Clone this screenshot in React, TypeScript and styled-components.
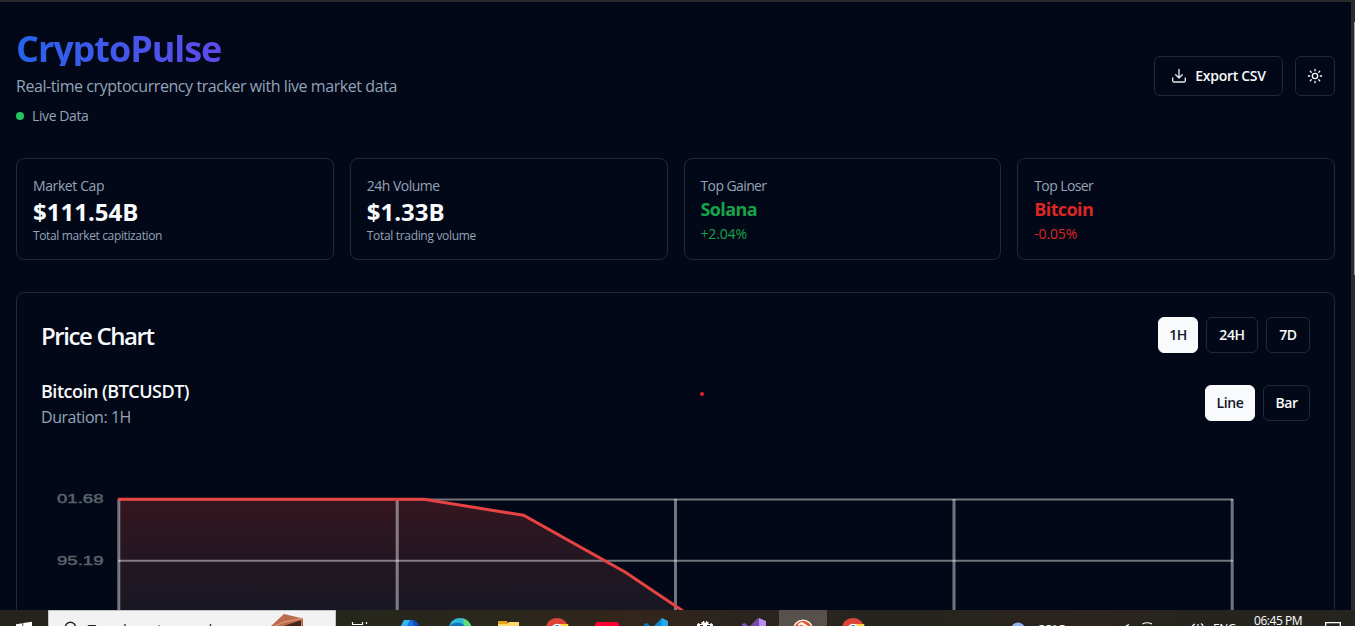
import React from 'react';
import styled, { createGlobalStyle } from 'styled-components';

const GlobalStyle = createGlobalStyle`
  * { box-sizing: border-box; }
  body {
    margin: 0;
    background: #020817;
    color: #f8fafc;
    font-family: "Open Sans", "Noto Sans", sans-serif;
    overflow: hidden;
  }
  h1, h2, h3, p { margin: 0; }
`;

const Screen = styled.div`
  width: 1355px;
  height: 626px;
  display: flex;
  flex-direction: column;
  overflow: hidden;
  background: #020817;
`;

const Viewport = styled.div`
  flex: 1;
  min-height: 0;
  display: flex;
  border-top: 2px solid #2a2a2b;
`;

const Page = styled.main`
  flex: 1;
  min-width: 0;
  padding: 24px 16px 0;
  overflow: hidden;
`;

const ScrollTrack = styled.div`
  width: 4px;
  background: #2c2c2c;
  border-left: 1px solid #2c2c2c;
  padding-left: 2px;
`;

const ScrollThumb = styled.div`
  width: 1px;
  height: 253px;
  margin-top: 20px;
  background: #9f9f9f;
`;

const Header = styled.header`
  display: flex;
  justify-content: space-between;
  align-items: center;
  margin-bottom: 32px;
`;

const Brand = styled.div`
  display: flex;
  flex-direction: column;
  align-items: flex-start;
`;

const Title = styled.h1`
  width: 390px;
  font-size: 36px;
  line-height: 40px;
  font-weight: 700;
  letter-spacing: -1.05px;
  color: transparent;
  background: linear-gradient(to right, #2563eb, #9333ea);
  background-clip: text;
  -webkit-background-clip: text;
  padding-top: 3px;
  height: 40px;
`;

const Tagline = styled.p`
  margin-top: 8px;
  font-size: 16px;
  line-height: 24px;
  letter-spacing: -0.43px;
  color: #94a3b8;
`;

const Live = styled.div`
  display: flex;
  align-items: center;
  gap: 8px;
  margin-top: 8px;
  font-size: 14px;
  line-height: 20px;
  letter-spacing: -0.4px;
  color: #94a3b8;
`;

const LiveDot = styled.span`
  width: 8px;
  height: 8px;
  border-radius: 50%;
  background: #22c55e;
`;

const Actions = styled.div`
  display: flex;
  gap: 12px;
`;

const ActionButton = styled.button<{ $w: number }>`
  display: flex;
  align-items: center;
  justify-content: center;
  gap: 8px;
  width: ${(p) => p.$w}px;
  height: 40px;
  padding: 0;
  border: 1px solid #1e293b;
  border-radius: 6px;
  background: #020817;
  color: #f8fafc;
  font: 600 14px/20px "Open Sans", sans-serif;
  letter-spacing: -0.3px;
`;

const Stats = styled.section`
  display: grid;
  grid-template-columns: repeat(4, 1fr);
  gap: 16px;
  margin-bottom: 32px;
`;

const StatCard = styled.article`
  height: 102px;
  padding: 16px;
  border: 1px solid #1e293b;
  border-radius: 8px;
`;

const StatLabel = styled.p<{ $track?: number }>`
  font-size: 14px;
  line-height: 21px;
  height: 20px;
  letter-spacing: ${(p) => p.$track ?? -0.4}px;
  color: #94a3b8;
`;

const StatValue = styled.p`
  font-size: 24px;
  line-height: 34px;
  height: 32px;
  font-weight: 700;
  letter-spacing: 0;
`;

const StatNote = styled.p<{ $track: number }>`
  font-size: 12px;
  line-height: 18px;
  height: 16px;
  letter-spacing: ${(p) => p.$track}px;
  color: #94a3b8;
`;

const MoverName = styled.p<{ $color: string }>`
  font-size: 18px;
  line-height: 28px;
  font-weight: 700;
  letter-spacing: -0.6px;
  color: ${(p) => p.$color};
`;

const MoverChange = styled.p<{ $color: string }>`
  font-size: 14px;
  line-height: 21px;
  letter-spacing: -0.15px;
  color: ${(p) => p.$color};
`;

const ChartCard = styled.section`
  height: 420px;
  padding: 24px;
  border: 1px solid #1e293b;
  border-radius: 8px;
`;

const Row = styled.div<{ $h: number }>`
  display: flex;
  align-items: center;
  justify-content: space-between;
  height: ${(p) => p.$h}px;
  margin-bottom: 24px;
`;

const ChartTitle = styled.h2`
  font-size: 24px;
  line-height: 36px;
  font-weight: 600;
  letter-spacing: -1.4px;
  padding-top: 2px;
`;

const PairName = styled.h3`
  font-size: 18px;
  line-height: 28px;
  font-weight: 600;
  letter-spacing: -0.5px;
`;

const Duration = styled.p`
  font-size: 16px;
  line-height: 25px;
  height: 24px;
  letter-spacing: -0.45px;
  color: #94a3b8;
`;

const ButtonGroup = styled.div`
  display: flex;
  gap: 8px;
`;

const Toggle = styled.button<{ $on?: boolean; $w: number }>`
  width: ${(p) => p.$w}px;
  height: 36px;
  padding: 0;
  border: 1px solid ${(p) => (p.$on ? '#f8fafc' : '#1e293b')};
  border-radius: 6px;
  background: ${(p) => (p.$on ? '#f8fafc' : '#020817')};
  color: ${(p) => (p.$on ? '#0f172a' : '#f8fafc')};
  font: 600 14px/20px "Open Sans", sans-serif;
  letter-spacing: -0.4px;
`;

const ChartSvg = styled.svg`
  display: block;
`;

const CursorDot = styled.span`
  position: absolute;
  left: 700px;
  top: 392px;
  width: 4px;
  height: 4px;
  border-radius: 50%;
  background: #e0242a;
`;

const Taskbar = styled.footer`
  height: 16px;
  display: flex;
  align-items: flex-start;
  overflow: hidden;
  background: linear-gradient(90deg, #26221c 0, #26271c 336px, #2a261c 500px, #33251c 640px, #2a241e 740px, #26241e 900px, #2c241e 1100px, #26241e 1200px, #25241f 1355px);
`;

const Slot = styled.div<{ $w: number; $active?: boolean }>`
  flex: none;
  width: ${(p) => p.$w}px;
  height: 16px;
  background: ${(p) => (p.$active ? '#58514b' : 'transparent')};
`;

const Search = styled.div`
  flex: none;
  display: flex;
  width: 288px;
  height: 16px;
  border: 1px solid #c4c4c4;
  border-bottom: 0;
  background: #f2f2f2;
`;

const SearchText = styled.span`
  width: 176px;
  padding-top: 8px;
  font-size: 15px;
  line-height: 20px;
  letter-spacing: -0.45px;
  color: #222;
  white-space: nowrap;
`;

const Apps = styled.div`
  display: flex;
  gap: 1.25px;
`;

const Tray = styled.div`
  flex: 1;
  display: flex;
  justify-content: flex-end;
`;

const TrayText = styled.span<{ $w: number; $top: number; $size: number }>`
  flex: none;
  width: ${(p) => p.$w}px;
  padding-top: ${(p) => p.$top}px;
  font-size: ${(p) => p.$size}px;
  line-height: 16px;
  letter-spacing: -0.45px;
  color: #fff;
  white-space: nowrap;
`;

const Glyph = ({ w = 48, children }: { w?: number; children: React.ReactNode }) => (
  <svg width={w} height="16" viewBox={`0 0 ${w} 16`} display="block">{children}</svg>
);

const Chrome = () => (
  <Glyph>
    <circle cx="24" cy="19.5" r="11.5" fill="#db4437" />
    <path d="M24 14h11.2L36 20H24Z" fill="#ffcd40" />
    <circle cx="24" cy="19.5" r="5.8" fill="#fff" />
    <circle cx="24" cy="19.5" r="4.5" fill="#4285f4" />
  </Glyph>
);

const PriceChart = () => (
  <ChartSvg width="1269" height="157" viewBox="41 453 1269 157">
    <defs>
      <linearGradient id="area" gradientUnits="userSpaceOnUse" x1="0" y1="499" x2="0" y2="620">
        <stop offset="0" stopColor="#35151f" />
        <stop offset="0.5" stopColor="#231722" />
        <stop offset="1" stopColor="#161723" />
      </linearGradient>
    </defs>
    <path d="M119 499H424L524 515.5L625 572L682 610H119Z" fill="url(#area)" />
    <g stroke="#fff" strokeOpacity="0.44">
      <path d="M118 499.5H1233M118 560.8H1233" strokeWidth="2" />
      <path d="M118.8 499V610M397.2 499V610M675.5 499V610M954 499V610M1232.2 499V610" strokeWidth="3" />
    </g>
    <path d="M118 499.3H424L523.5 515.3L625 572L683 611" fill="none" stroke="#e84343" strokeWidth="3" />
    <g fill="#5b606b" fontFamily="Liberation Sans, sans-serif" fontSize="12" stroke="#5b606b" strokeWidth="0.45">
      <text x="57" y="503.3" textLength="46.5" lengthAdjust="spacingAndGlyphs">01.68</text>
      <text x="57" y="564.8" textLength="46.5" lengthAdjust="spacingAndGlyphs">95.19</text>
    </g>
  </ChartSvg>
);

export default function App() {
  return (
    <Screen>
      <GlobalStyle />
      <Viewport>
        <Page>
          <Header>
            <Brand>
              <Title>CryptoPulse</Title>
              <Tagline>Real-time cryptocurrency tracker with live market data</Tagline>
              <Live><LiveDot />Live Data</Live>
            </Brand>
            <Actions>
              <ActionButton $w={129}>
                <svg width="16" height="16" viewBox="0 0 16 16" fill="none" stroke="#e5e7eb" strokeWidth="1.35" strokeLinecap="round" strokeLinejoin="round">
                  <path d="M8 1.5V10M4.7 6.8L8 10L11.3 6.8M1.7 10V12.7A1.4 1.4 0 0 0 3.1 14H12.9A1.4 1.4 0 0 0 14.3 12.7V10" />
                </svg>
                Export CSV
              </ActionButton>
              <ActionButton $w={40}>
                <svg width="16" height="16" viewBox="0 0 24 24" fill="none" stroke="#f8fafc" strokeWidth="2" strokeLinecap="round">
                  <circle cx="12" cy="12" r="4" />
                  <path d="M12 2v2M12 20v2M4.93 4.93l1.41 1.41M17.66 17.66l1.41 1.41M2 12h2M20 12h2M6.34 17.66l-1.41 1.41M19.07 4.93l-1.41 1.41" />
                </svg>
              </ActionButton>
            </Actions>
          </Header>

          <Stats>
            <StatCard>
              <StatLabel>Market Cap</StatLabel>
              <StatValue>$111.54B</StatValue>
              <StatNote $track={-0.37}>Total market capitization</StatNote>
            </StatCard>
            <StatCard>
              <StatLabel $track={-0.5}>24h Volume</StatLabel>
              <StatValue>$1.33B</StatValue>
              <StatNote $track={-0.32}>Total trading volume</StatNote>
            </StatCard>
            <StatCard>
              <StatLabel $track={-0.6}>Top Gainer</StatLabel>
              <MoverName $color="#16a34a">Solana</MoverName>
              <MoverChange $color="#16a34a">+2.04%</MoverChange>
            </StatCard>
            <StatCard>
              <StatLabel $track={-0.6}>Top Loser</StatLabel>
              <MoverName $color="#dc2626">Bitcoin</MoverName>
              <MoverChange $color="#dc2626">-0.05%</MoverChange>
            </StatCard>
          </Stats>

          <ChartCard>
            <Row $h={36}>
              <ChartTitle>Price Chart</ChartTitle>
              <ButtonGroup>
                <Toggle $on $w={40}>1H</Toggle>
                <Toggle $w={52}>24H</Toggle>
                <Toggle $w={44}>7D</Toggle>
              </ButtonGroup>
            </Row>
            <Row $h={52}>
              <div>
                <PairName>Bitcoin (BTCUSDT)</PairName>
                <Duration>Duration: 1H</Duration>
              </div>
              <ButtonGroup>
                <Toggle $on $w={50}>Line</Toggle>
                <Toggle $w={47}>Bar</Toggle>
              </ButtonGroup>
            </Row>
            <PriceChart />
          </ChartCard>
        </Page>
        <ScrollTrack><ScrollThumb /></ScrollTrack>
      </Viewport>

      <Taskbar>
        <Slot $w={48}>
          <Glyph>
            <path d="M16 14.2L22.4 13.2V16H16ZM23.2 13L32 11.8V16H23.2Z" fill="#fff" />
          </Glyph>
        </Slot>
        <Search>
          <Glyph w={39}>
            <circle cx="21.5" cy="16.5" r="5.2" fill="none" stroke="#222" strokeWidth="1.4" />
          </Glyph>
          <SearchText>Type here to search</SearchText>
          <Glyph w={72}>
            <path d="M7 16L21 3L40 7.5V16Z" fill="#b96b4b" />
            <path d="M18 16L40 8.5V16Z" fill="#48251b" />
            <path d="M10 16L21 11L39 7.5V16" fill="none" stroke="#dc906a" strokeWidth="1.4" />
          </Glyph>
        </Search>
        <Apps>
          <Slot $w={48}>
            <Glyph><path d="M16.5 12V14.5H26.5V12M30.5 12V14" fill="none" stroke="#fff" strokeWidth="1.2" /></Glyph>
          </Slot>
          <Slot $w={48}>
            <Glyph>
              <path d="M19 10H29L33 16H16Z" fill="#1976d8" />
              <path d="M19 10H25L22 16H16Z" fill="#35b6f4" />
              <path d="M27 10L32 12L34 16H29Z" fill="#1b45c8" />
            </Glyph>
          </Slot>
          <Slot $w={48}>
            <Glyph>
              <circle cx="25" cy="19.5" r="11.5" fill="#2db7d8" />
              <path d="M28 8.4C34 10 37 15 36.5 19L29 16Z" fill="#5fdb78" />
              <path d="M14 16C19 11.5 27 11.5 29.5 16Z" fill="#1273b8" />
            </Glyph>
          </Slot>
          <Slot $w={48}>
            <Glyph>
              <path d="M14 11H23L24 14H14Z" fill="#e6a317" />
              <path d="M14 14H23L25 12H35V16H14Z" fill="#ffd869" />
            </Glyph>
          </Slot>
          <Slot $w={48}><Chrome /></Slot>
          <Slot $w={48}>
            <Glyph><rect x="13" y="12" width="24" height="14" rx="3" fill="#ff0033" /></Glyph>
          </Slot>
          <Slot $w={48}>
            <Glyph>
              <path d="M12 14L15 13L18 16H12Z" fill="#0878bd" />
              <path d="M30 8L22 16H30Z" fill="#0c8bd2" />
              <path d="M30 8L36 11V16H29Z" fill="#28a9ed" />
            </Glyph>
          </Slot>
          <Slot $w={48}>
            <Glyph>
              <path d="M16 16V14.5L17.5 13L19 14H20.5V12H22V11H23.2V12.5H25V11H26.2V12H27.5V14H29L30.5 13L32 14.5V16H29V15H26V16H22V15H19V16Z" fill="#fff" />
            </Glyph>
          </Slot>
          <Slot $w={48}>
            <Glyph>
              <path d="M12 14L15 13L18 16H12Z" fill="#8051b7" />
              <path d="M28 8L20 16H30L31 9Z" fill="#754baa" />
              <path d="M29 8L36 11V16H29Z" fill="#bd8cf2" />
            </Glyph>
          </Slot>
          <Slot $w={48} $active>
            <Glyph>
              <circle cx="24" cy="19.3" r="9.2" fill="#e95430" stroke="#fff" strokeWidth="1.3" />
              <path d="M19 14L23 12L29 16H25L22 14.5L20 16Z" fill="#fff" />
            </Glyph>
          </Slot>
          <Slot $w={48}><Chrome /></Slot>
        </Apps>
        <Tray>
          <Slot $w={30}>
            <Glyph w={30}><circle cx="10" cy="19.5" r="7" fill="#8fb4f4" /></Glyph>
          </Slot>
          <TrayText $w={86} $top={11} $size={13}>28°C</TrayText>
          <Slot $w={89}>
            <Glyph w={89}>
              <path d="M2 16L5 14.5M18.5 14Q23 11.5 28 14M68 16L71 14M74 14V16M77 13.5Q79 15 79 16" fill="none" stroke="#fff" strokeWidth="1.2" />
            </Glyph>
          </Slot>
          <TrayText $w={41} $top={11} $size={12}>ENG</TrayText>
          <TrayText $w={71} $top={3} $size={12}>06:45 PM</TrayText>
          <Slot $w={30}>
            <Glyph w={30}><path d="M.7 16V12.7H15.3V16" fill="none" stroke="#fff" strokeWidth="1.3" /></Glyph>
          </Slot>
        </Tray>
      </Taskbar>
      <CursorDot />
    </Screen>
  );
}
